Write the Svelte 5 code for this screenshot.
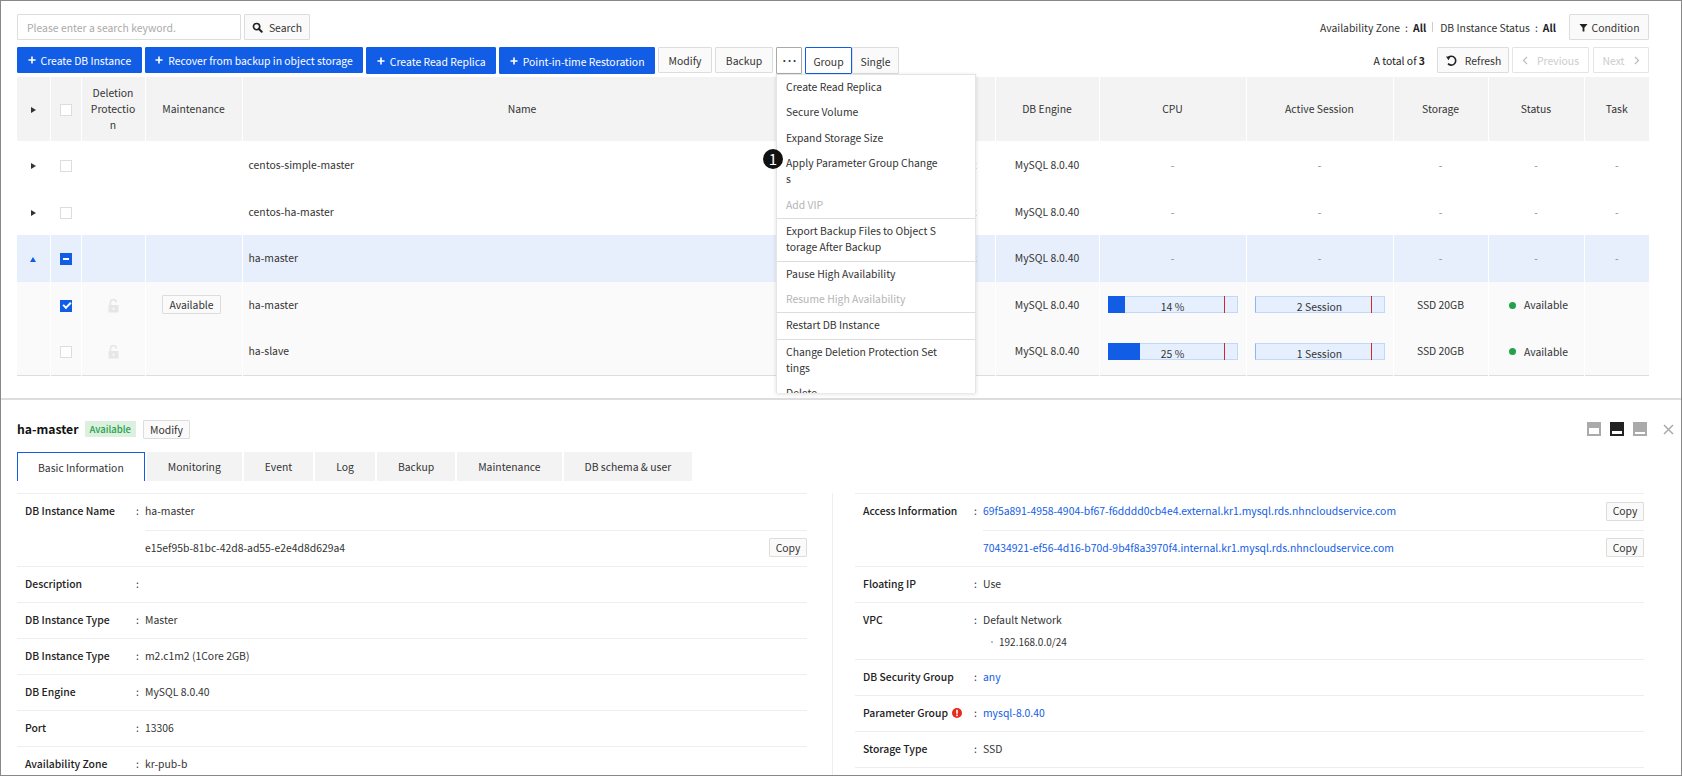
<script>
  const primaryActions = [
    { label: 'Create DB Instance', low: false },
    { label: 'Recover from backup in object storage', low: false },
    { label: 'Create Read Replica', low: true },
    { label: 'Point-in-time Restoration', low: true }
  ];

  const menuGroups = [
    [
      { label: 'Create Read Replica' },
      { label: 'Secure Volume' },
      { label: 'Expand Storage Size' },
      { label: 'Apply Parameter Group Changes' },
      { label: 'Add VIP', disabled: true }
    ],
    [{ label: 'Export Backup Files to Object Storage After Backup' }],
    [{ label: 'Pause High Availability' }, { label: 'Resume High Availability', disabled: true }],
    [{ label: 'Restart DB Instance' }],
    [{ label: 'Change Deletion Protection Settings' }, { label: 'Delete' }]
  ];

  const columns = ['', '', 'Deletion Protection', 'Maintenance', 'Name', 'Type', 'DB Engine', 'CPU', 'Active Session', 'Storage', 'Status', 'Task'];
  const widths = [33, 31, 64, 97, 560, 193, 104, 147, 147, 95, 96, 65];

  const groups = [
    { name: 'centos-simple-master', kind: 'plain' },
    { name: 'centos-ha-master', kind: 'plain' },
    { name: 'ha-master', kind: 'open' }
  ];
  const members = [
    { name: 'ha-master', checked: true, cpu: 14, session: 2, maintenance: true },
    { name: 'ha-slave', checked: false, cpu: 25, session: 1, maintenance: false }
  ];

  const tabs = ['Basic Information', 'Monitoring', 'Event', 'Log', 'Backup', 'Maintenance', 'DB schema & user'];

  const leftRows = [
    { label: 'DB Instance Type', value: 'Master' },
    { label: 'DB Instance Type', value: 'm2.c1m2 (1Core 2GB)' },
    { label: 'DB Engine', value: 'MySQL 8.0.40' },
    { label: 'Port', value: '13306' },
    { label: 'Availability Zone', value: 'kr-pub-b' }
  ];
</script>

{#snippet plus()}
  <svg class="ico" width="8" height="8" viewBox="0 0 9 9"><path d="M3.6 0.5h1.8v3.1h3.1v1.8H5.4v3.1H3.6V5.4H0.5V3.6h3.1z" fill="#fff" /></svg>
{/snippet}

{#snippet copy()}
  <button class="btn copy">Copy</button>
{/snippet}

<div class="frame">
  <section class="top">
    <div class="toolbar">
      <input class="search" placeholder="Please enter a search keyword." />
      <button class="btn search-btn">
        <svg class="ico" width="11" height="11" viewBox="0 0 12 12"><circle cx="5" cy="5" r="3.4" fill="none" stroke="#222" stroke-width="1.8" /><path d="M7.6 7.6l3 3" stroke="#222" stroke-width="2.2" stroke-linecap="round" /></svg>
        Search
      </button>
      <div class="right filters">
        <span>Availability Zone</span><span class="colon">:</span><b>All</b>
        <i class="bar"></i>
        <span>DB Instance Status</span><span class="colon">:</span><b>All</b>
        <button class="btn condition">
          <svg class="ico" width="9" height="9" viewBox="0 0 10 10"><path d="M0.5 1h9L6 5.2V9.5H4V5.2z" fill="#222" /></svg>
          Condition
        </button>
      </div>
    </div>

    <div class="toolbar second">
      {#each primaryActions as action}
        <button class="btn primary" class:low={action.low}>{@render plus()}{action.label}</button>
      {/each}
      <button class="btn modify">Modify</button>
      <button class="btn backup">Backup</button>
      <div class="more-wrap">
        <button class="btn more">···</button>
        <span class="marker">1</span>
        <div class="menu">
          {#each menuGroups as group}
            <ul>
              {#each group as item}
                <li class:disabled={item.disabled}>{item.label}</li>
              {/each}
            </ul>
          {/each}
        </div>
      </div>
      <div class="switch">
        <button class="btn low active">Group</button>
        <button class="btn low">Single</button>
      </div>
      <div class="right paging">
        <span class="total">A total of <b>3</b></span>
        <button class="btn refresh">
          <svg class="ico" width="13" height="13" viewBox="0 0 13 13"><path d="M3.4 3.4A4.4 4.4 0 1 1 3 9.6" fill="none" stroke="#222" stroke-width="1.6" /><path d="M1 2.6l4.4 0.2-1.9 3.4z" fill="#222" /></svg>
          Refresh
        </button>
        <button class="btn off prev">
          <svg class="chev" width="6" height="9" viewBox="0 0 6 9"><path d="M5 1L1.5 4.5 5 8" fill="none" stroke="#bbb" stroke-width="1.2" /></svg>
          Previous
        </button>
        <button class="btn off next">
          Next
          <svg class="chev" width="6" height="9" viewBox="0 0 6 9"><path d="M1 1l3.5 3.5L1 8" fill="none" stroke="#bbb" stroke-width="1.2" /></svg>
        </button>
      </div>
    </div>

    <table>
      <colgroup>
        {#each widths as w}<col style="width: {w}px" />{/each}
      </colgroup>
      <thead>
        <tr>
          {#each columns as col, i}
            <th>
              {#if i === 0}<span class="tri"></span>{/if}
              {#if i === 1}<span class="check"></span>{/if}
              {col}
            </th>
          {/each}
        </tr>
      </thead>
      <tbody>
        {#each groups as g}
          <tr class:open={g.kind === 'open'}>
            <td><span class="tri" class:up={g.kind === 'open'}></span></td>
            <td><span class="check" class:partial={g.kind === 'open'}></span></td>
            <td></td>
            <td></td>
            <td class="name">{g.name}</td>
            <td class="clipped">Default</td>
            <td>MySQL 8.0.40</td>
            <td class="dash">-</td>
            <td class="dash">-</td>
            <td class="dash">-</td>
            <td class="dash">-</td>
            <td class="dash">-</td>
          </tr>
        {/each}
        {#each members as m}
          <tr class="member">
            <td></td>
            <td><span class="check" class:checked={m.checked}></span></td>
            <td>
              <svg class="lock" width="11" height="14" viewBox="0 0 11 14"><path d="M2.4 6V3.8a3 3 0 0 1 6-0.4" fill="none" stroke="#e6e6e6" stroke-width="1.7" /><rect x="0.5" y="6" width="10" height="7.5" fill="#e6e6e6" /><rect x="4.7" y="8.5" width="1.6" height="2.6" fill="#fafafa" /></svg>
            </td>
            <td>{#if m.maintenance}<button class="btn tag">Available</button>{/if}</td>
            <td class="name">{m.name}</td>
            <td class="clipped"></td>
            <td>MySQL 8.0.40</td>
            <td>
              <div class="meter cpu">
                <div class="fill" style="width: {m.cpu}%"></div>
                <div class="limit"></div>
                <span>{m.cpu} %</span>
              </div>
            </td>
            <td>
              <div class="meter session">
                <div class="limit"></div>
                <span>{m.session} Session</span>
              </div>
            </td>
            <td>SSD 20GB</td>
            <td><span class="status"><i class="dot"></i>Available</span></td>
            <td></td>
          </tr>
        {/each}
      </tbody>
    </table>
  </section>

  <section class="detail">
    <header class="detail-head">
      <h2>ha-master</h2>
      <span class="badge">Available</span>
      <button class="btn small">Modify</button>
      <div class="views">
        <span class="view v1"></span>
        <span class="view v2"></span>
        <span class="view v3"></span>
      </div>
      <svg class="close" width="11" height="11" viewBox="0 0 11 11"><path d="M1 1l9 9M10 1l-9 9" stroke="#aaa" stroke-width="1.5" /></svg>
    </header>

    <nav class="tabs">
      {#each tabs as tab, i}
        <span class="tab" class:current={i === 0}>{tab}</span>
      {/each}
    </nav>

    <div class="panes">
      <div class="pane left">
        <div class="row double">
          <span class="label">DB Instance Name</span><span class="colon">:</span>
          <div class="values">
            <div class="line">ha-master</div>
            <div class="line">e15ef95b-81bc-42d8-ad55-e2e4d8d629a4{@render copy()}</div>
          </div>
        </div>
        <div class="row">
          <span class="label">Description</span><span class="colon">:</span>
        </div>
        {#each leftRows as r}
          <div class="row">
            <span class="label">{r.label}</span><span class="colon">:</span><span>{r.value}</span>
          </div>
        {/each}
      </div>

      <div class="pane rightpane">
        <div class="row double">
          <span class="label">Access Information</span><span class="colon">:</span>
          <div class="values">
            <div class="line"><a href="#a">69f5a891-4958-4904-bf67-f6dddd0cb4e4.external.kr1.mysql.rds.nhncloudservice.com</a>{@render copy()}</div>
            <div class="line"><a href="#a">70434921-ef56-4d16-b70d-9b4f8a3970f4.internal.kr1.mysql.rds.nhncloudservice.com</a>{@render copy()}</div>
          </div>
        </div>
        <div class="row">
          <span class="label">Floating IP</span><span class="colon">:</span><span>Use</span>
        </div>
        <div class="row vpc">
          <span class="label">VPC</span><span class="colon">:</span>
          <div>
            <div>Default Network</div>
            <div class="subnet"><i></i>192.168.0.0/24</div>
          </div>
        </div>
        <div class="row">
          <span class="label">DB Security Group</span><span class="colon">:</span><a href="#a">any</a>
        </div>
        <div class="row">
          <span class="label">Parameter Group
            <svg class="warn" width="10" height="10" viewBox="0 0 10 10"><circle cx="5" cy="5" r="5" fill="#e8291c" /><rect x="4.2" y="1.8" width="1.6" height="4" fill="#fff" /><rect x="4.2" y="6.6" width="1.6" height="1.6" fill="#fff" /></svg>
          </span><span class="colon">:</span><a href="#a">mysql-8.0.40</a>
        </div>
        <div class="row">
          <span class="label">Storage Type</span><span class="colon">:</span><span>SSD</span>
        </div>
      </div>
    </div>
  </section>
</div>

<style>
  :global(body) {
    margin: 0;
    background: #fff;
  }

  .frame {
    box-sizing: border-box;
    width: 1682px;
    height: 776px;
    border: 1px solid #888;
    display: flex;
    flex-direction: column;
    overflow: hidden;
    font-family: "Noto Sans CJK KR", "Noto Sans", sans-serif;
    font-size: 10.4px;
    color: #333;
  }

  .top {
    box-sizing: border-box;
    height: 399px;
    flex: none;
    padding: 13px 32px 0 16px;
    border-bottom: 2px solid #ddd;
    position: relative;
  }

  .toolbar {
    display: flex;
    align-items: flex-start;
    height: 26px;
  }

  .toolbar.second {
    margin-top: 7px;
    gap: 3px;
  }

  .right {
    margin-left: auto;
    display: flex;
    align-items: center;
  }

  .btn {
    box-sizing: border-box;
    height: 26px;
    padding: 0 10px;
    border: 1px solid #ddd;
    border-radius: 1px;
    background: #fafafa;
    font: inherit;
    color: #333;
    display: inline-flex;
    align-items: center;
    justify-content: center;
    white-space: nowrap;
  }

  .ico {
    flex: none;
  }

  .search {
    box-sizing: border-box;
    width: 224px;
    height: 26px;
    padding: 0 9px;
    border: 1px solid #ddd;
    border-radius: 1px;
    font: inherit;
    color: #333;
    outline: none;
  }

  .search::placeholder {
    color: #aaa;
  }

  .search-btn {
    margin-left: 3px;
    width: 66px;
    gap: 6px;
    padding: 0;
  }

  .filters {
    height: 26px;
  }

  .filters .colon {
    margin: 0 5px;
  }

  .filters b {
    font-weight: 700;
    color: #222;
  }

  .bar {
    width: 1px;
    height: 10px;
    background: #ccc;
    margin: 0 7px 0 6px;
  }

  .condition {
    margin-left: 13px;
    width: 80px;
    padding: 0;
    gap: 4px;
  }

  .primary {
    background: #125de6;
    border-color: #125de6;
    color: #fff;
    gap: 5px;
    padding: 0 9.5px;
  }

  .primary.low,
  .btn.low {
    height: 27px;
    padding-top: 2px;
  }

  .primary.low .ico {
    margin-top: -1px;
  }

  .modify {
    width: 54px;
    padding: 0;
  }

  .backup {
    width: 58px;
    padding: 0;
  }

  .more-wrap {
    position: relative;
  }

  .more {
    width: 26px;
    padding: 0;
    border-color: #aaa;
    background: #fff;
    height: 27px;
    font-weight: 700;
    letter-spacing: -1px;
  }

  .switch {
    display: flex;
  }

  .switch .btn {
    width: 47px;
    padding-left: 0;
    padding-right: 0;
  }

  .switch .active {
    background: #fff;
    border-color: #125de6;
  }

  .menu {
    position: absolute;
    top: 27px;
    left: 0;
    z-index: 5;
    box-sizing: border-box;
    width: 200px;
    height: 319px;
    overflow: hidden;
    background: #fff;
    border: 1px solid #e4e4e4;
    border-bottom: 0;
    box-shadow: 0 1px 4px rgba(0, 0, 0, 0.14);
  }

  .menu ul {
    list-style: none;
    margin: 0;
    padding: 0;
    border-bottom: 1px solid #ddd;
  }

  .menu li {
    padding: 4px 36.6px 4.8px 9px;
    line-height: 16.5px;
    word-break: break-all;
    color: #333;
  }

  .menu li.disabled {
    color: #b5b5b5;
  }

  .marker {
    position: absolute;
    left: -13px;
    top: 102px;
    width: 20px;
    height: 20px;
    border-radius: 50%;
    background: #111;
    color: #fff;
    text-align: center;
    line-height: 20px;
    font-size: 15px;
    z-index: 6;
  }

  .paging {
    gap: 3px;
  }

  .total {
    margin-right: 9px;
    color: #222;
  }

  .total b {
    font-weight: 700;
  }

  .refresh {
    width: 72px;
    padding: 0;
    gap: 7px;
  }

  .off {
    color: #ccc;
    background: #fff;
    border-color: #e4e4e4;
    gap: 9px;
    padding: 0;
  }

  .prev {
    width: 77px;
  }

  .next {
    width: 56px;
    margin-left: 1px;
  }

  .chev {
    flex: none;
  }

  table {
    margin-top: 4px;
    width: 1632px;
    table-layout: fixed;
    border-collapse: collapse;
    border-bottom: 1px solid #ddd;
  }

  th,
  td {
    padding: 0;
    text-align: center;
    border-right: 1px solid #fff;
    font-weight: 400;
    line-height: 16px;
  }

  th:last-child,
  td:last-child {
    border-right: 0;
  }

  th {
    height: 64px;
    background: #f3f3f3;
    padding: 0 8px;
    word-break: break-all;
  }

  td {
    height: 47px;
  }

  tr.open td,
  tr.member td {
    height: 46.5px;
  }

  .name {
    text-align: left;
    padding-left: 6px;
  }

  .clipped {
    text-align: right;
    padding-right: 18px;
    color: #888;
  }

  .dash {
    color: #888;
  }

  tr.open td {
    background: #e8effc;
  }

  tr.member td {
    background: #fafafa;
  }

  .tri {
    display: inline-block;
    width: 0;
    height: 0;
    border-style: solid;
    border-width: 3.5px 0 3.5px 5px;
    border-color: transparent transparent transparent #333;
    vertical-align: middle;
  }

  .tri.up {
    border-width: 0 3.5px 5px 3.5px;
    border-color: transparent transparent #125de6 transparent;
  }

  .check {
    box-sizing: border-box;
    display: inline-block;
    width: 12px;
    height: 12px;
    background: #fff;
    border: 1px solid #ddd;
    vertical-align: middle;
    position: relative;
  }

  .check.partial,
  .check.checked {
    background: #125de6;
    border-color: #125de6;
  }

  .check.partial::after {
    content: "";
    position: absolute;
    left: 2px;
    right: 2px;
    top: 4px;
    height: 2px;
    background: #fff;
  }

  .check.checked::after {
    content: "";
    position: absolute;
    left: 2px;
    top: 1px;
    width: 6px;
    height: 3px;
    border-left: 2px solid #fff;
    border-bottom: 2px solid #fff;
    transform: rotate(-45deg);
  }

  .lock {
    vertical-align: middle;
  }

  .tag {
    height: 19px;
    width: 59px;
    padding: 0;
    margin-right: 4px;
    vertical-align: middle;
  }

  .meter {
    box-sizing: border-box;
    position: relative;
    height: 17px;
    width: 130px;
    margin: 0 auto;
    background: #e6effd;
    border: 1px solid #c3d8f9;
    text-align: center;
    line-height: 19px;
  }

  .meter.session {
    border-left-color: #8eb4f5;
  }

  .fill {
    position: absolute;
    left: -1px;
    top: -1px;
    bottom: -1px;
    background: #125de6;
  }

  .limit {
    position: absolute;
    right: 12px;
    top: -1px;
    bottom: -1px;
    width: 1px;
    background: #d8232a;
  }

  .meter span {
    position: relative;
  }

  .status {
    display: inline-flex;
    align-items: center;
    margin-left: 5px;
  }

  .dot {
    width: 7px;
    height: 7px;
    border-radius: 50%;
    background: #22a24b;
    margin-right: 8px;
  }

  .detail {
    flex: 1;
    overflow: hidden;
    min-height: 0;
  }

  .detail-head {
    display: flex;
    align-items: center;
    height: 20px;
    padding: 19px 6px 0 16px;
  }

  h2 {
    margin: 0;
    font-size: 12.2px;
    font-weight: 700;
    color: #111;
  }

  .badge {
    margin-left: 6px;
    padding: 0 5px;
    height: 16px;
    line-height: 16px;
    font-size: 9.5px;
    background: #ddf0e0;
    color: #22a24b;
    font-weight: 500;
  }

  .small {
    height: 19px;
    margin-left: 7px;
    padding: 0 6px;
  }

  .views {
    margin-left: auto;
    display: flex;
    gap: 9px;
  }

  .view {
    box-sizing: border-box;
    width: 14px;
    height: 14px;
    border: 1px solid #aaa;
    background: #aaa;
    position: relative;
  }

  .view::after {
    content: "";
    position: absolute;
    left: 1px;
    right: 1px;
    bottom: 1px;
    background: #fff;
  }

  .v1::after {
    height: 6px;
  }

  .v2 {
    background: #222;
    border-color: #222;
  }

  .v2::after {
    height: 3px;
  }

  .v3::after {
    height: 2px;
  }

  .close {
    margin-left: 16px;
    margin-right: 1px;
  }

  .tabs {
    display: flex;
    gap: 2px;
    margin: 13px 0 0 16px;
  }

  .tab {
    box-sizing: border-box;
    height: 29px;
    line-height: 30px;
    padding: 0 21px;
    background: #f3f3f3;
  }

  .tab.current {
    background: #fff;
    border: 1px solid #125de6;
    border-bottom: 0;
    padding: 0 20px;
  }

  .panes {
    display: flex;
    margin: 12px 0 0 16px;
  }

  .pane {
    border-top: 1px solid #eee;
  }

  .pane.left {
    width: 790px;
  }

  .pane.rightpane {
    width: 789px;
    margin-left: 48px;
    position: relative;
  }

  .pane.rightpane::before {
    content: "";
    position: absolute;
    left: -23px;
    top: -1px;
    height: 290px;
    width: 1px;
    background: #eee;
  }

  .row {
    box-sizing: border-box;
    display: flex;
    align-items: center;
    height: 36px;
    padding-left: 8px;
    padding-bottom: 1px;
    border-bottom: 1px solid #eee;
    line-height: 16px;
  }

  .row.double {
    height: 73px;
    padding-bottom: 0;
    align-items: flex-start;
  }

  .row.vpc {
    height: 57px;
    align-items: flex-start;
    padding-top: 9px;
  }

  .row .label {
    width: 111px;
    flex: none;
    font-weight: 500;
    color: #222;
    white-space: nowrap;
  }

  .row.double .label,
  .row.double > .colon {
    margin-top: 9px;
  }

  .row .colon {
    width: 9px;
    flex: none;
  }

  .values {
    flex: 1;
  }

  .line {
    box-sizing: border-box;
    display: flex;
    align-items: center;
    justify-content: space-between;
    height: 36px;
    padding-bottom: 2px;
    color: #333;
  }

  .line + .line {
    border-top: 1px solid #eee;
  }

  .copy {
    height: 19px;
    width: 38px;
    padding: 0;
  }

  a {
    color: #125de6;
    text-decoration: none;
  }

  .subnet {
    margin-top: 6px;
    padding-left: 8px;
    font-size: 10px;
    display: flex;
    align-items: center;
    gap: 6px;
  }

  .subnet i {
    width: 2px;
    height: 2px;
    background: #aaa;
    border-radius: 50%;
  }

  .warn {
    margin-left: 2px;
    vertical-align: -1px;
  }
</style>
